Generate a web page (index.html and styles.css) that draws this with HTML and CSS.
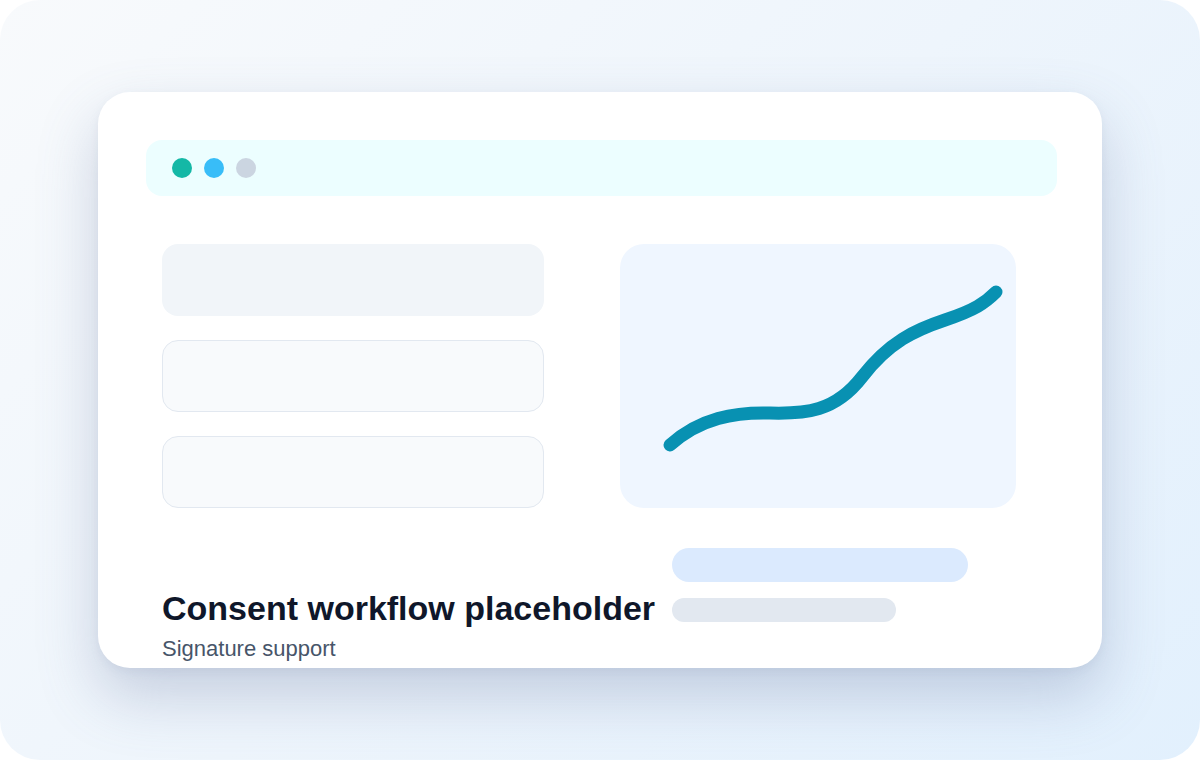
FILE: index.html
```html
<!DOCTYPE html>
<html lang="en">
<head>
<meta charset="utf-8">
<title>Consent workflow placeholder</title>
<link rel="stylesheet" href="styles.css">
</head>
<body>
<div class="frame">
  <div class="card">
    <div class="chrome">
      <span class="dot dot-teal"></span>
      <span class="dot dot-sky"></span>
      <span class="dot dot-gray"></span>
    </div>
    <div class="content">
      <div class="rows">
        <div class="row row-solid"></div>
        <div class="row row-outline"></div>
        <div class="row row-outline"></div>
      </div>
      <div class="chart">
        <svg class="chart-svg" width="396" height="264" viewBox="0 0 396 264">
          <path d="M50 201 C80 174 115 168 150 169 S215 168 242 133 S295 86 325 76 S365 59 376 48" fill="none" stroke="#0891b2" stroke-width="13" stroke-linecap="round" stroke-linejoin="round"/>
        </svg>
      </div>
    </div>
    <div class="footer">
      <div class="text">
        <h1 class="title">Consent workflow placeholder</h1>
        <p class="subtitle">Signature support</p>
      </div>
      <div class="bars">
        <div class="bar bar-blue"></div>
        <div class="bar bar-gray"></div>
      </div>
    </div>
  </div>
</div>
</body>
</html>
```

FILE: styles.css
```css
html, body {
  margin: 0;
  padding: 0;
  background: #ffffff;
}

body {
  font-family: "Liberation Sans", Arial, sans-serif;
}

.frame {
  width: 1200px;
  height: 760px;
  box-sizing: border-box;
  padding: 92px 98px;
  border-radius: 40px;
  background: linear-gradient(135deg, #f8fafc 0%, #eef5fc 50%, #e2f0fd 100%);
  overflow: hidden;
}

.card {
  width: 1004px;
  height: 576px;
  box-sizing: border-box;
  padding: 48px 45px 48px 48px;
  background: #ffffff;
  border-radius: 32px;
  box-shadow: 0 28px 60px rgba(100, 116, 160, 0.3), 0 4px 10px rgba(148, 163, 184, 0.12);
  overflow: hidden;
}

.chrome {
  height: 56px;
  border-radius: 16px;
  background: #ecfeff;
  display: flex;
  align-items: center;
  gap: 12px;
  padding-left: 26px;
}

.dot {
  width: 20px;
  height: 20px;
  border-radius: 50%;
}

.dot-teal { background: #14b8a6; }
.dot-sky { background: #38bdf8; }
.dot-gray { background: #cbd5e1; }

.content {
  margin-top: 48px;
  padding: 0 16px;
  display: grid;
  grid-template-columns: 382px 396px;
  column-gap: 76px;
}

.rows {
  display: flex;
  flex-direction: column;
  gap: 24px;
}

.row {
  height: 72px;
  box-sizing: border-box;
  border-radius: 16px;
}

.row-solid {
  background: #f1f5f9;
}

.row-outline {
  background: #f8fafc;
  border: 1px solid #e2e8f0;
}

.chart {
  height: 264px;
  border-radius: 24px;
  background: #eff6ff;
  overflow: hidden;
}

.chart-svg {
  display: block;
}

.footer {
  margin-top: 40px;
  padding: 0 16px;
  display: flex;
  align-items: flex-start;
}

.text {
  width: 510px;
  flex: none;
  margin-top: 40px;
}

.title {
  margin: 0;
  font-size: 34px;
  line-height: 40px;
  font-weight: 700;
  color: #0f172a;
  white-space: nowrap;
}

.subtitle {
  margin: 6px 0 0;
  font-size: 22px;
  line-height: 30px;
  color: #475569;
  white-space: nowrap;
}

.bars {
  display: flex;
  flex-direction: column;
  gap: 16px;
}

.bar {
  border-radius: 999px;
}

.bar-blue {
  width: 296px;
  height: 34px;
  background: #dbeafe;
}

.bar-gray {
  width: 224px;
  height: 24px;
  background: #e2e8f0;
}
```
